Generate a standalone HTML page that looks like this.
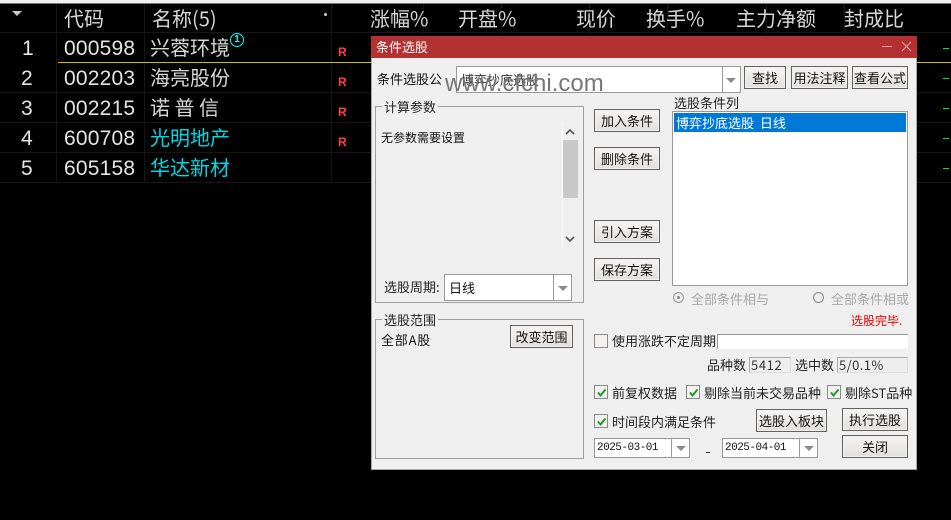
<!DOCTYPE html>
<html><head><meta charset="utf-8"><style>
html,body{margin:0;padding:0;background:#000;width:951px;height:520px;overflow:hidden}
body{position:relative;font-family:"Liberation Sans","Noto Sans CJK SC",sans-serif}
div{position:absolute;box-sizing:border-box}
svg{position:absolute}
.t{white-space:nowrap;line-height:1;font-family:"Noto Sans CJK SC","Liberation Sans",sans-serif}
.h{color:#d8d8d8;font-size:20px;top:8px}
.n{color:#e4e4e4;font-size:21px;letter-spacing:.2px;line-height:24px;font-family:"Liberation Sans",sans-serif;white-space:nowrap}
.c{font-size:20px;white-space:nowrap;line-height:24px;color:#d8d8d8;font-family:"Noto Sans CJK SC",sans-serif}
.hl{background:#161616;height:1px;left:0;width:951px}
.vl{background:#161616;width:1px;top:4px;height:178px}
.r{color:#ff4040;font-size:12px;font-weight:bold;left:338px;line-height:12px}
.g{background:#00f000;width:6px;height:1px;left:943px}
.d{color:#111;font-size:13px}
.btn{background:linear-gradient(#f6f5f3,#e2e0dc);border:1px solid #626262;color:#111;font-size:13px;text-align:center;line-height:21px;font-family:"Noto Sans CJK SC",sans-serif;white-space:nowrap;box-shadow:inset 0 0 0 1px #f0f0f0}
.box{background:#fff;border:1px solid #999}
.grp{border:1px solid #a0a0a0}
.cb{width:14px;height:14px;border:1px solid #8a8a8a;background:#f2f1ee}
.arr{width:0;height:0;border-left:5px solid transparent;border-right:5px solid transparent;border-top:5px solid #8a8a8a}
</style></head><body>
<div style="left:0;top:0;width:951px;height:3px;background:#f0f0f0"></div>
<div style="left:0;top:3px;width:951px;height:1px;background:#777"></div>

<div class="hl" style="top:32px"></div>
<div class="hl" style="top:92px"></div>
<div class="hl" style="top:122px"></div>
<div class="hl" style="top:152px"></div>
<div class="hl" style="top:182px"></div>
<div class="vl" style="left:56px"></div>
<div class="vl" style="left:144px"></div>
<div class="vl" style="left:331px"></div>
<div class="vl" style="left:423px;height:30px"></div>
<div class="vl" style="left:501px;height:30px"></div>
<div class="vl" style="left:589px;height:30px"></div>
<div class="vl" style="left:667px;height:30px"></div>
<div class="vl" style="left:766px;height:30px"></div>
<div class="vl" style="left:844px;height:30px"></div>
<div style="left:58px;top:62px;width:893px;height:1px;background:#c8c000"></div>

<div style="left:12px;top:11px;width:0;height:0;border-left:5px solid transparent;border-right:5px solid transparent;border-top:5px solid #c8c8c8"></div>
<div class="t h" style="left:64px">代码</div>
<div class="t h" style="left:152px">名称(5)</div>
<div style="left:324px;top:13px;width:3px;height:3px;border-radius:2px;background:#ccc"></div>
<div class="t h" style="left:370px">涨幅%</div>
<div class="t h" style="left:458px">开盘%</div>
<div class="t h" style="left:576px">现价</div>
<div class="t h" style="left:646px">换手%</div>
<div class="t h" style="left:736px">主力净额</div>
<div class="t h" style="left:844px">封成比</div>

<div class="n" style="left:22px;top:37px">1</div>
<div class="n" style="left:21px;top:67px">2</div>
<div class="n" style="left:21px;top:97px">3</div>
<div class="n" style="left:21px;top:127px">4</div>
<div class="n" style="left:21px;top:157px">5</div>
<div class="n" style="left:64px;top:37px">000598</div>
<div class="n" style="left:64px;top:67px">002203</div>
<div class="n" style="left:64px;top:97px">002215</div>
<div class="n" style="left:64px;top:127px">600708</div>
<div class="n" style="left:64px;top:157px">605158</div>
<div class="c" style="left:150px;top:35px">兴蓉环境</div>
<div style="left:230px;top:33px;width:14px;height:14px;border:1.5px solid #00ffff;border-radius:50%;color:#00ffff;font-size:10px;font-weight:bold;line-height:11px;text-align:center">1</div>
<div class="c" style="left:150px;top:65px">海亮股份</div>
<div class="c" style="left:150px;top:95px">诺 普 信</div>
<div class="c" style="left:150px;top:125px;color:#00d8e8">光明地产</div>
<div class="c" style="left:150px;top:155px;color:#00d8e8">华达新材</div>
<div class="r" style="top:46px">R</div>
<div class="r" style="top:76px">R</div>
<div class="r" style="top:106px">R</div>
<div class="r" style="top:136px">R</div>
<div class="g" style="top:48px"></div>
<div class="g" style="top:78px"></div>
<div class="g" style="top:108px"></div>
<div class="g" style="top:138px"></div>
<div class="g" style="top:168px"></div>

<!-- dialog -->
<div style="left:371px;top:36px;width:546px;height:434px;background:#efefef;border:1px solid #a8a8a8;border-top:0">
</div>
<div style="left:371px;top:36px;width:546px;height:22px;background:#b33033"></div>
<div class="t" style="left:376px;top:40px;color:#fff;font-size:13px">条件选股</div>
<div style="left:882px;top:46px;width:10px;height:1px;background:#e0a8a8"></div>
<svg style="left:901px;top:41px" width="11" height="11"><path d="M1 1L10 10M10 1L1 10" stroke="#e0a8a8" fill="none"/></svg>

<div class="t d" style="left:377px;top:72px">条件选股公</div>
<div class="box" style="left:456px;top:66px;width:285px;height:27px"></div>
<div style="left:722px;top:67px;width:1px;height:25px;background:#999"></div>
<div class="arr" style="left:726px;top:78px"></div>
<div class="t d" style="left:461px;top:73px;color:#333">博弈抄底选股</div>
<div style="left:445px;top:71px;color:#777;font-size:24px;line-height:26px;white-space:nowrap;font-family:'Liberation Sans',sans-serif">www.cfchi.com</div>
<div class="btn" style="left:744px;top:66px;width:42px;height:23px">查找</div>
<div class="btn" style="left:791px;top:66px;width:57px;height:23px">用法注释</div>
<div class="btn" style="left:852px;top:66px;width:56px;height:23px">查看公式</div>

<div class="grp" style="left:375px;top:106px;width:209px;height:197px"></div>
<div class="t d" style="left:382px;top:100px;background:#efefef;padding:0 2px;color:#222">计算参数</div>
<div class="t d" style="left:381px;top:132px;font-size:12px">无参数需要设置</div>
<div style="left:562px;top:123px;width:1px;height:125px;background:#fff"></div>
<div style="left:563px;top:140px;width:15px;height:58px;background:#c8c8c8"></div>
<svg style="left:565px;top:129px" width="10" height="7"><path d="M1 5L5 1L9 5" stroke="#555" stroke-width="1.6" fill="none"/></svg>
<svg style="left:565px;top:236px" width="10" height="7"><path d="M1 1L5 5L9 1" stroke="#555" stroke-width="1.6" fill="none"/></svg>
<div class="t d" style="left:384px;top:280px;color:#222">选股周期:</div>
<div class="box" style="left:444px;top:274px;width:128px;height:27px"></div>
<div style="left:553px;top:275px;width:1px;height:25px;background:#999"></div>
<div class="arr" style="left:558px;top:286px"></div>
<div class="t d" style="left:449px;top:281px">日线</div>

<div class="btn" style="left:594px;top:109px;width:66px;height:23px">加入条件</div>
<div class="btn" style="left:594px;top:147px;width:66px;height:23px">删除条件</div>
<div class="btn" style="left:594px;top:220px;width:66px;height:23px">引入方案</div>
<div class="btn" style="left:594px;top:258px;width:66px;height:23px">保存方案</div>

<div class="t d" style="left:674px;top:96px;color:#222">选股条件列</div>
<div class="box" style="left:672px;top:111px;width:236px;height:175px"></div>
<div style="left:674px;top:113px;width:232px;height:19px;background:#0078d7"></div>
<div class="t" style="left:676px;top:116px;color:#fff;font-size:13px">博弈抄底选股&nbsp;&nbsp;日线</div>

<div style="left:673px;top:292px;width:11px;height:11px;border-radius:50%;border:1px solid #999;background:#eee"></div>
<div style="left:677px;top:296px;width:3px;height:3px;border-radius:50%;background:#888"></div>
<div class="t d" style="left:691px;top:292px;color:#a8a8a8">全部条件相与</div>
<div style="left:813px;top:292px;width:11px;height:11px;border-radius:50%;border:1px solid #888;background:#eee"></div>
<div class="t d" style="left:831px;top:292px;color:#a8a8a8">全部条件相或</div>
<div class="t" style="left:851px;top:315px;color:#f00000;font-size:12px">选股完毕.</div>

<div class="grp" style="left:375px;top:319px;width:209px;height:140px"></div>
<div class="t d" style="left:382px;top:313px;background:#efefef;padding:0 2px;color:#222">选股范围</div>
<div class="t d" style="left:381px;top:333px;word-spacing:0;letter-spacing:.8px">全部A股</div>
<div class="btn" style="left:510px;top:325px;width:63px;height:23px">改变范围</div>

<div class="cb" style="left:594px;top:334px"></div>
<div class="t d" style="left:612px;top:334px;color:#222">使用涨跌不定周期</div>
<div style="left:717px;top:334px;width:191px;height:15px;background:#fff;border-top:1px solid #999;border-left:1px solid #999"></div>
<div class="t d" style="left:707px;top:358px;color:#222">品种数</div>
<div style="left:749px;top:357px;width:42px;height:16px;background:#eee;border:1px solid #ddd;border-top-color:#aaa;border-left-color:#aaa"></div>
<div class="t d" style="left:751px;top:358px;color:#333;letter-spacing:.6px">5412</div>
<div class="t d" style="left:795px;top:358px;color:#222">选中数</div>
<div style="left:837px;top:357px;width:71px;height:16px;background:#eee;border:1px solid #ddd;border-top-color:#aaa;border-left-color:#aaa"></div>
<div class="t d" style="left:839px;top:358px;color:#333;letter-spacing:.4px">5/0.1%</div>

<div class="cb" style="left:594px;top:385px"><svg style="left:1px;top:1px" width="11" height="11"><path d="M2 5.5L4.5 8.5L9.5 2.5" stroke="#1a9a2a" stroke-width="2" fill="none"/></svg></div>
<div class="t d" style="left:612px;top:386px;color:#222">前复权数据</div>
<div class="cb" style="left:686px;top:385px"><svg style="left:1px;top:1px" width="11" height="11"><path d="M2 5.5L4.5 8.5L9.5 2.5" stroke="#1a9a2a" stroke-width="2" fill="none"/></svg></div>
<div class="t d" style="left:704px;top:386px;color:#222">剔除当前未交易品种</div>
<div class="cb" style="left:827px;top:385px"><svg style="left:1px;top:1px" width="11" height="11"><path d="M2 5.5L4.5 8.5L9.5 2.5" stroke="#1a9a2a" stroke-width="2" fill="none"/></svg></div>
<div class="t d" style="left:845px;top:386px;color:#222">剔除ST品种</div>

<div class="cb" style="left:594px;top:414px"><svg style="left:1px;top:1px" width="11" height="11"><path d="M2 5.5L4.5 8.5L9.5 2.5" stroke="#1a9a2a" stroke-width="2" fill="none"/></svg></div>
<div class="t d" style="left:612px;top:415px;color:#222">时间段内满足条件</div>
<div class="btn" style="left:756px;top:409px;width:71px;height:23px">选股入板块</div>
<div class="btn" style="left:842px;top:408px;width:66px;height:23px">执行选股</div>
<div class="btn" style="left:842px;top:435px;width:66px;height:23px">关闭</div>

<div class="box" style="left:594px;top:438px;width:96px;height:20px"></div>
<div style="left:671px;top:439px;width:1px;height:18px;background:#999"></div>
<div class="arr" style="left:676px;top:446px"></div>
<div style="left:597px;top:443px;font-size:11px;letter-spacing:-.5px;line-height:11px;color:#111;font-family:'Liberation Mono',monospace;white-space:nowrap">2025-03-01</div>
<div style="left:706px;top:452px;width:4px;height:1px;background:#333"></div>
<div class="box" style="left:722px;top:438px;width:96px;height:20px"></div>
<div style="left:799px;top:439px;width:1px;height:18px;background:#999"></div>
<div class="arr" style="left:804px;top:446px"></div>
<div style="left:725px;top:443px;font-size:11px;letter-spacing:-.5px;line-height:11px;color:#111;font-family:'Liberation Mono',monospace;white-space:nowrap">2025-04-01</div>
</body></html>
